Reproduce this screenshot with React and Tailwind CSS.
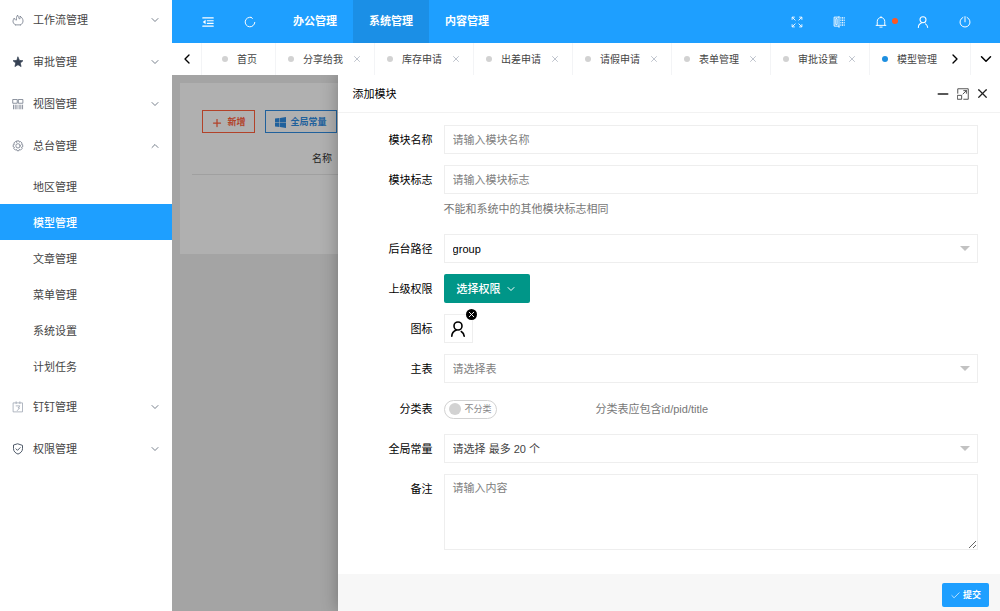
import { useState } from "react";
import clsx from "clsx";
import { Check, ChevronDown, ChevronLeft, ChevronRight, ChevronUp, Minus, Plus, X } from "lucide-react";

const Svg = ({ size = 12, width = 1, children, className }) => (
  <svg
    width={size}
    height={size}
    viewBox="0 0 16 16"
    fill="none"
    stroke="currentColor"
    strokeWidth={width}
    strokeLinecap="round"
    strokeLinejoin="round"
    className={className}
    aria-hidden="true"
  >
    {children}
  </svg>
);

const FireIcon = () => (
  <Svg>
    <path d="M4.500 14.500C2.400 13.400 1.200 11.300 1.300 9.300c.1-1.500.9-2.600 1.500-3.800.9.6 1.300 1.300 1.500 2.300M6 8c-.3-2.500-.2-4.500 1.500-6.500.2 1.800 1.600 2.600 2 4.500M10.500 6.500c.5-1.300.4-2.400.1-3.700 2.500 1.500 4.100 4 4.100 6.500 0 2.200-1.200 4.100-3.200 5.200" />
    <path d="M4.500 14.500h7" />
  </Svg>
);

const StarIcon = () => (
  <Svg>
    <path fill="currentColor" d="M8 1.500l1.900 4.400 4.700.4-3.600 3.100 1.100 4.700L8 11.600l-4.100 2.500L5 9.400 1.400 6.300l4.700-.4z" />
  </Svg>
);

const ViewIcon = () => (
  <Svg>
    <path d="M1.500 2h5.500v5H1.500zM9 2h5.500v5H9zM2 9.500v5M4.300 9.500v5M6.600 9.500v5M9.500 9.500v5M11.800 9.500v5M14.100 9.500v5" />
  </Svg>
);

const GearIcon = () => (
  <Svg>
    <path d="M6.600 1.200h2.800l.5 1.700 1.600-.8 2 2-.9 1.600 1.700.6v2.900l-1.700.6.9 1.600-2 2-1.600-.8-.5 1.700H6.600l-.6-1.700-1.600.8-2-2 .9-1.600-1.700-.6V6.300l1.700-.6-.9-1.600 2-2 1.600.8z" />
    <circle cx="8" cy="7.800" r="2.900" />
  </Svg>
);

const BoardIcon = () => (
  <Svg>
    <path d="M2 2.500h12v12H2zM5.500 1v2.500M10.500 1v2.500M5.500 6.500h5L8 9.200h2.200L7 12.800" />
  </Svg>
);

const ShieldIcon = () => (
  <Svg width={1.3}>
    <path d="M8 1.200l6 2v4.300c0 3.500-2.400 5.900-6 7.300-3.600-1.400-6-3.800-6-7.300V3.200zM5.300 7.800l2 2 3.600-3.600" />
  </Svg>
);

const UserIcon = ({ size, width = 1.4 }) => (
  <Svg size={size} width={width}>
    <circle cx="8" cy="5" r="4" />
    <path d="M1.800 15.200c0-2.600 1.600-5 4.500-6.200M11.300 10.500c1.600 1 2.700 2.600 2.900 4.700" />
  </Svg>
);

const FoldIcon = () => (
  <Svg width={1.4}>
    <path d="M1 2.500h14M7 6.200h8M7 9.800h8M1 13.500h14" />
    <path fill="currentColor" stroke="none" d="M1 8l3.800-3v6z" />
  </Svg>
);

const RefreshIcon = () => (
  <Svg width={1.3}>
    <path d="M9.500 1.800A6.400 6.400 0 1 0 14.400 8.500M9.500 1.800l1.700 1.400" />
  </Svg>
);

const FullscreenIcon = () => (
  <Svg width={1.2}>
    <path d="M1.500 4.500v-3h3M2 2l3.500 3.500M11.500 1.500h3v3M14 2l-3.500 3.500M1.500 11.500v3h3M2 14l3.500-3.500M14.500 11.500v3h-3M14 14l-3.500-3.500" />
  </Svg>
);

const ThemeIcon = () => (
  <Svg width={1.2}>
    <path d="M8 1.500H1.500v12H8M8 .8v14.400M5.500 4v7.500H3.700V4z" />
    <path strokeDasharray="1 2.200" d="M10.500 2v12M12.700 2v12M14.900 2v12" />
  </Svg>
);

const BellIcon = () => (
  <Svg width={1.3}>
    <path d="M1.500 12.500h13M3 12.500V7.300C3 4.300 5.200 2 8 2s5 2.300 5 5.300v5.200M6.500 14.800h3M8 2V.8" />
  </Svg>
);

const PowerIcon = () => (
  <Svg width={1.3}>
    <path d="M5.200 1.900a6.700 6.700 0 1 0 5.600 0M8 .8v7" />
  </Svg>
);

const MaximizeIcon = () => (
  <Svg width={1.2}>
    <path d="M1 7V1h14v14H9M1 9.800h5.200V15H1zM8 8l4.500-4.500M9 3.500h3.500V7" />
  </Svg>
);

const WindowsIcon = () => (
  <svg width="11" height="11" viewBox="0 0 16 16" fill="currentColor" aria-hidden="true">
    <path d="M0 2.300l6.500-.9v6.200H0zM7.300 1.300L16 0v7.600H7.300zM0 8.400h6.500v6.200L0 13.700zM7.300 8.400H16V16l-8.700-1.300z" />
  </svg>
);

const MENU = [
  { label: "工作流管理", icon: FireIcon, tone: "text-gray-500" },
  { label: "审批管理", icon: StarIcon, tone: "text-gray-700" },
  { label: "视图管理", icon: ViewIcon, tone: "text-gray-500" },
  {
    label: "总台管理",
    icon: GearIcon,
    tone: "text-gray-500",
    children: ["地区管理", "模型管理", "文章管理", "菜单管理", "系统设置", "计划任务"],
  },
  { label: "钉钉管理", icon: BoardIcon, tone: "text-gray-400" },
  { label: "权限管理", icon: ShieldIcon, tone: "text-gray-600" },
];

const TOP_NAV = ["办公管理", "系统管理", "内容管理"];

const TOOLS = [
  { label: "全屏", icon: FullscreenIcon },
  { label: "主题", icon: ThemeIcon },
  { label: "消息", icon: BellIcon, dot: true },
  { label: "用户", icon: UserIcon },
  { label: "退出", icon: PowerIcon },
];

const TABS = ["分享给我", "库存申请", "出差申请", "请假申请", "表单管理", "审批设置", "模型管理"];

const Sidebar = () => (
  <aside className="w-[172px] shrink-0 overflow-hidden bg-white text-[#444]">
    <ul className="-mt-px">
      {MENU.map(({ label, icon: Icon, tone, children }) => (
        <li key={label}>
          <a href="#" className="flex h-[42px] items-center pr-[11px] pl-3">
            <span className={clsx("w-[21px]", tone)}>
              <Icon />
            </span>
            <span className="flex-1">{label}</span>
            {children ? (
              <ChevronUp size={12} strokeWidth={1.5} className="text-gray-600" />
            ) : (
              <ChevronDown size={12} strokeWidth={1.5} className="text-gray-600" />
            )}
          </a>
          {children && (
            <ul className="pt-px pb-0.5">
              {children.map((item) => (
                <li key={item}>
                  <a
                    href="#"
                    className={clsx(
                      "flex h-9 items-center pt-0.5 pl-[33px]",
                      item === "模型管理" && "bg-[#1e9fff] font-medium text-white"
                    )}
                  >
                    {item}
                  </a>
                </li>
              ))}
            </ul>
          )}
        </li>
      ))}
    </ul>
  </aside>
);

const Header = () => (
  <header className="flex h-[43px] shrink-0 items-stretch bg-[#1e9fff] pr-[14px] pl-[15px] text-white">
    <button aria-label="收起菜单" className="flex w-[42px] items-center justify-center">
      <FoldIcon />
    </button>
    <button aria-label="刷新" className="flex w-[42px] items-center justify-center">
      <RefreshIcon />
    </button>
    <nav className="ml-1.5 flex">
      {TOP_NAV.map((item) => (
        <a
          key={item}
          href="#"
          className={clsx(
            "flex w-[76px] items-center justify-center font-bold",
            item === "系统管理" && "bg-[#1b8fe6]"
          )}
        >
          {item}
        </a>
      ))}
    </nav>
    <div className="ml-auto flex">
      {TOOLS.map(({ label, icon: Icon, dot }) => (
        <button key={label} aria-label={label} className="relative flex w-[42px] items-center justify-center">
          <Icon />
          {dot && <span className="absolute top-[18px] right-1 size-1.5 rounded-full bg-[#ff5722]" />}
        </button>
      ))}
    </div>
  </header>
);

const TabBar = () => (
  <div className="flex h-8 shrink-0 bg-white text-[10px] text-[#444]">
    <button aria-label="向左" className="flex w-[30px] shrink-0 items-center justify-center border-r border-gray-100 text-black">
      <ChevronLeft size={16} strokeWidth={2} />
    </button>
    <ul className="flex min-w-0 flex-1 overflow-hidden pl-2">
      <li className="flex shrink-0 items-center gap-[9px] border-r border-gray-100 pr-[18px] pl-3">
        <span className="size-1.5 rounded-full bg-[#d2d2d2]" />
        <a href="#">首页</a>
      </li>
      {TABS.map((tab) => (
        <li key={tab} className="flex shrink-0 items-center gap-[9px] border-r border-gray-100 pr-3 pl-3">
          <span
            className={clsx("size-1.5 rounded-full", tab === "模型管理" ? "bg-[#1e8fe0]" : "bg-[#d2d2d2]")}
          />
          <a href="#">{tab}</a>
          <button aria-label={`关闭${tab}`} className="text-gray-400">
            <X size={10} strokeWidth={1.5} />
          </button>
        </li>
      ))}
    </ul>
    <button aria-label="向右" className="flex w-[30px] shrink-0 items-center justify-center text-black">
      <ChevronRight size={16} strokeWidth={2} />
    </button>
    <button aria-label="更多" className="flex w-[30px] shrink-0 items-center justify-center border-l border-gray-100 text-black">
      <ChevronDown size={18} strokeWidth={2} />
    </button>
  </div>
);

const ListPage = () => (
  <div className="h-full bg-[#ebebeb] p-2">
    <div className="h-[171px] bg-[#fcfcfc] px-3 pt-[27px]">
      <div className="flex gap-2.5 pl-2.5 text-[9px] font-bold">
        <button className="flex h-[23px] w-[53px] items-center justify-center gap-1 border border-[#ff5f3c] pt-0.5 text-[#ff5f3c]">
          <Plus size={12} strokeWidth={2.5} />
          新增
        </button>
        <button className="flex h-[23px] w-[72px] items-center justify-center gap-1 border border-[#2f8be0] pt-0.5 text-[#2f8be0]">
          <WindowsIcon />
          全局常量
        </button>
      </div>
      <table className="mt-2 w-full text-[10px]">
        <thead>
          <tr className="h-[33px] border-b border-[#e6e6e6]">
            <th className="w-[260px] pt-0.5 font-normal text-[#333]">名称</th>
            <th />
          </tr>
        </thead>
      </table>
    </div>
  </div>
);

const FIELD = "w-full border border-[#eee] bg-white px-2 outline-none";

const Row = ({ label, id, children }) => (
  <div className="flex gap-[11px]">
    <label htmlFor={id} className="w-[95px] shrink-0 text-right leading-[31px] -mb-0.5 text-black">
      {label}
    </label>
    <div className="min-w-0 flex-1">{children}</div>
  </div>
);

const SelectBox = ({ id, option, tone }) => (
  <div className="relative">
    <select id={id} className={clsx(FIELD, "block h-[29px] appearance-none pt-0.5", tone)}>
      <option>{option}</option>
    </select>
    <span className="pointer-events-none absolute top-3 right-2 border-x-[5px] border-t-[5px] border-x-transparent border-t-[#c2c2c2]" />
  </div>
);

const Drawer = () => {
  const [classified, setClassified] = useState(false);

  return (
    <section className="absolute inset-y-0 right-0 flex w-4/5 flex-col bg-white shadow-[0_0_16px_rgba(0,0,0,0.3)]">
      <div className="flex h-[38px] shrink-0 items-center border-b border-[#f2f2f2] pr-2.5 pl-[15px] text-black">
        <h2 className="flex-1 pt-0.5">添加模块</h2>
        <div className="flex items-center gap-1.5 text-[#222]">
          <button aria-label="最小化">
            <Minus size={16} strokeWidth={2.5} />
          </button>
          <button aria-label="最大化" className="text-[#444]">
            <MaximizeIcon />
          </button>
          <button aria-label="关闭">
            <X size={15} strokeWidth={2} />
          </button>
        </div>
      </div>

      <form className="flex flex-1 flex-col gap-[11px] pt-3 pr-[22px]">
        <Row label="模块名称" id="name">
          <input id="name" placeholder="请输入模块名称" className={clsx(FIELD, "block h-[29px] placeholder:text-[#808080]")} />
        </Row>
        <Row label="模块标志" id="mark">
          <input id="mark" placeholder="请输入模块标志" className={clsx(FIELD, "block h-[29px] placeholder:text-[#808080]")} />
          <p className="pt-px leading-7 text-[#777]">不能和系统中的其他模块标志相同</p>
        </Row>
        <Row label="后台路径" id="path">
          <SelectBox id="path" option="group" tone="text-black" />
        </Row>
        <Row label="上级权限" id="auth">
          <button
            id="auth"
            type="button"
            className="flex h-[29px] w-[86px] items-center justify-center gap-1 rounded-xs bg-[#009688] pt-px font-medium text-white"
          >
            选择权限
            <ChevronDown size={12} strokeWidth={2} />
          </button>
        </Row>
        <Row label="图标" id="icon">
          <div className="relative size-[29px]">
            <button
              id="icon"
              type="button"
              aria-label="选择图标"
              className="flex size-full items-center justify-center border border-[#eee] text-black"
            >
              <UserIcon size={16} width={1.6} />
            </button>
            <button
              type="button"
              aria-label="清除图标"
              className="absolute -top-[5px] -right-1 flex size-[11px] items-center justify-center rounded-full bg-black text-white"
            >
              <X size={9} strokeWidth={2.5} />
            </button>
          </div>
        </Row>
        <Row label="主表" id="table">
          <SelectBox id="table" option="请选择表" tone="text-[#808080]" />
        </Row>
        <Row label="分类表" id="classified">
          <div className="flex h-[29px] items-center pt-px">
            <div className="w-[152px]">
              <label className="flex h-[19px] w-[53px] items-center gap-1 rounded-full border border-[#d2d2d2] pl-1 text-[9px] text-[#888]">
                <input
                  id="classified"
                  type="checkbox"
                  checked={classified}
                  onChange={(e) => setClassified(e.target.checked)}
                  className="size-3 appearance-none rounded-full bg-[#d2d2d2] checked:bg-[#5fb878]"
                />
                <span className="pt-0.5">{classified ? "分类" : "不分类"}</span>
              </label>
            </div>
            <span className="text-[#777]">分类表应包含id/pid/title</span>
          </div>
        </Row>
        <Row label="全局常量" id="constants">
          <SelectBox id="constants" option="请选择 最多 20 个" tone="text-[#444]" />
        </Row>
        <Row label="备注" id="remark">
          <textarea
            id="remark"
            placeholder="请输入内容"
            className={clsx(FIELD, "block h-[76px] resize-y py-1 leading-[18px] placeholder:text-[#808080]")}
          />
        </Row>
      </form>

      <footer className="flex h-[37px] shrink-0 items-center justify-end bg-[#f7f7f7] pt-1 pr-[11px]">
        <button className="flex h-6 w-[47px] items-center justify-center gap-0.5 rounded-xs bg-[#1e9fff] pt-0.5 text-[9px] font-bold text-white">
          <Check size={11} strokeWidth={1.5} />
          提交
        </button>
      </footer>
    </section>
  );
};

export default function App() {
  return (
    <div className="flex h-screen overflow-hidden bg-white font-['Liberation_Sans','Noto_Sans_CJK_SC',sans-serif] text-[11px]">
      <Sidebar />
      <div className="flex min-w-0 flex-1 flex-col">
        <Header />
        <TabBar />
        <main className="relative min-h-0 flex-1 overflow-hidden">
          <ListPage />
          <div className="absolute inset-0 bg-black/30" />
          <Drawer />
        </main>
      </div>
    </div>
  );
}
